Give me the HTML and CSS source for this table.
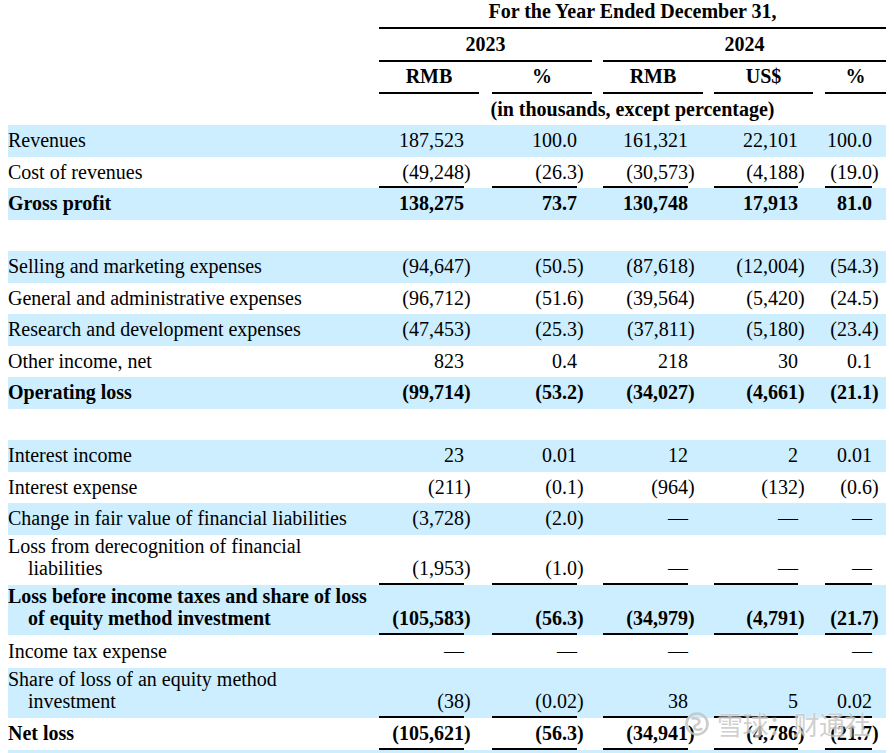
FILE: index.html
```html
<!DOCTYPE html>
<html lang="en">
<head>
<meta charset="utf-8">
<title>Results of Operations</title>
<link rel="stylesheet" href="styles.css">
</head>
<body>
<table class="fin">
  <colgroup>
    <col class="w-lbl">
    <col class="w-v"><col class="w-p"><col class="w-g13">
    <col class="w-v"><col class="w-p"><col class="w-g11">
    <col class="w-v"><col class="w-p"><col class="w-g11">
    <col class="w-v84"><col class="w-p"><col class="w-g12">
    <col class="w-v47"><col class="w-p14">
  </colgroup>
  <thead>
    <tr class="h1"><td></td><td colspan="14" class="rule">For the Year Ended December 31,</td></tr>
    <tr class="h2"><td></td><td colspan="5" class="rule">2023</td><td></td><td colspan="8" class="rule">2024</td></tr>
    <tr class="h3"><td></td><td colspan="2" class="rule">RMB</td><td></td><td colspan="2" class="rule">%</td><td></td><td colspan="2" class="rule">RMB</td><td></td><td colspan="2" class="rule">US$</td><td></td><td colspan="2" class="rule">%</td></tr>
    <tr class="h4"><td></td><td colspan="14">(in thousands, except percentage)</td></tr>
  </thead>
  <tbody>
    <tr>
      <td class="lbl">Revenues</td>
      <td class="n">187,523</td><td class="p"></td><td></td>
      <td class="n">100.0</td><td class="p"></td><td></td>
      <td class="n">161,321</td><td class="p"></td><td></td>
      <td class="n">22,101</td><td class="p"></td><td></td>
      <td class="n">100.0</td><td class="p"></td>
    </tr>
    <tr class="ul">
      <td class="lbl">Cost of revenues</td>
      <td class="n">(49,248</td><td class="p">)</td><td></td>
      <td class="n">(26.3</td><td class="p">)</td><td></td>
      <td class="n">(30,573</td><td class="p">)</td><td></td>
      <td class="n">(4,188</td><td class="p">)</td><td></td>
      <td class="n">(19.0</td><td class="p">)</td>
    </tr>
    <tr class="b">
      <td class="lbl">Gross profit</td>
      <td class="n">138,275</td><td class="p"></td><td></td>
      <td class="n">73.7</td><td class="p"></td><td></td>
      <td class="n">130,748</td><td class="p"></td><td></td>
      <td class="n">17,913</td><td class="p"></td><td></td>
      <td class="n">81.0</td><td class="p"></td>
    </tr>
    <tr class="blank"><td colspan="15"></td></tr>
    <tr>
      <td class="lbl">Selling and marketing expenses</td>
      <td class="n">(94,647</td><td class="p">)</td><td></td>
      <td class="n">(50.5</td><td class="p">)</td><td></td>
      <td class="n">(87,618</td><td class="p">)</td><td></td>
      <td class="n">(12,004</td><td class="p">)</td><td></td>
      <td class="n">(54.3</td><td class="p">)</td>
    </tr>
    <tr>
      <td class="lbl">General and administrative expenses</td>
      <td class="n">(96,712</td><td class="p">)</td><td></td>
      <td class="n">(51.6</td><td class="p">)</td><td></td>
      <td class="n">(39,564</td><td class="p">)</td><td></td>
      <td class="n">(5,420</td><td class="p">)</td><td></td>
      <td class="n">(24.5</td><td class="p">)</td>
    </tr>
    <tr>
      <td class="lbl">Research and development expenses</td>
      <td class="n">(47,453</td><td class="p">)</td><td></td>
      <td class="n">(25.3</td><td class="p">)</td><td></td>
      <td class="n">(37,811</td><td class="p">)</td><td></td>
      <td class="n">(5,180</td><td class="p">)</td><td></td>
      <td class="n">(23.4</td><td class="p">)</td>
    </tr>
    <tr>
      <td class="lbl">Other income, net</td>
      <td class="n">823</td><td class="p"></td><td></td>
      <td class="n">0.4</td><td class="p"></td><td></td>
      <td class="n">218</td><td class="p"></td><td></td>
      <td class="n">30</td><td class="p"></td><td></td>
      <td class="n">0.1</td><td class="p"></td>
    </tr>
    <tr class="b">
      <td class="lbl">Operating loss</td>
      <td class="n">(99,714</td><td class="p">)</td><td></td>
      <td class="n">(53.2</td><td class="p">)</td><td></td>
      <td class="n">(34,027</td><td class="p">)</td><td></td>
      <td class="n">(4,661</td><td class="p">)</td><td></td>
      <td class="n">(21.1</td><td class="p">)</td>
    </tr>
    <tr class="blank"><td colspan="15"></td></tr>
    <tr>
      <td class="lbl">Interest income</td>
      <td class="n">23</td><td class="p"></td><td></td>
      <td class="n">0.01</td><td class="p"></td><td></td>
      <td class="n">12</td><td class="p"></td><td></td>
      <td class="n">2</td><td class="p"></td><td></td>
      <td class="n">0.01</td><td class="p"></td>
    </tr>
    <tr>
      <td class="lbl">Interest expense</td>
      <td class="n">(211</td><td class="p">)</td><td></td>
      <td class="n">(0.1</td><td class="p">)</td><td></td>
      <td class="n">(964</td><td class="p">)</td><td></td>
      <td class="n">(132</td><td class="p">)</td><td></td>
      <td class="n">(0.6</td><td class="p">)</td>
    </tr>
    <tr>
      <td class="lbl">Change in fair value of financial liabilities</td>
      <td class="n">(3,728</td><td class="p">)</td><td></td>
      <td class="n">(2.0</td><td class="p">)</td><td></td>
      <td class="n">—</td><td class="p"></td><td></td>
      <td class="n">—</td><td class="p"></td><td></td>
      <td class="n">—</td><td class="p"></td>
    </tr>
    <tr class="ul two">
      <td class="lbl">Loss from derecognition of financial<br>liabilities</td>
      <td class="n">(1,953</td><td class="p">)</td><td></td>
      <td class="n">(1.0</td><td class="p">)</td><td></td>
      <td class="n">—</td><td class="p"></td><td></td>
      <td class="n">—</td><td class="p"></td><td></td>
      <td class="n">—</td><td class="p"></td>
    </tr>
    <tr class="ul two b">
      <td class="lbl">Loss before income taxes and share of loss<br>of equity method investment</td>
      <td class="n">(105,583</td><td class="p">)</td><td></td>
      <td class="n">(56.3</td><td class="p">)</td><td></td>
      <td class="n">(34,979</td><td class="p">)</td><td></td>
      <td class="n">(4,791</td><td class="p">)</td><td></td>
      <td class="n">(21.7</td><td class="p">)</td>
    </tr>
    <tr class="h33">
      <td class="lbl">Income tax expense</td>
      <td class="n">—</td><td class="p"></td><td></td>
      <td class="n">—</td><td class="p"></td><td></td>
      <td class="n">—</td><td class="p"></td><td></td>
      <td class="n"></td><td class="p"></td><td></td>
      <td class="n">—</td><td class="p"></td>
    </tr>
    <tr class="ul two">
      <td class="lbl">Share of loss of an equity method<br>investment</td>
      <td class="n">(38</td><td class="p">)</td><td></td>
      <td class="n">(0.02</td><td class="p">)</td><td></td>
      <td class="n">38</td><td class="p"></td><td></td>
      <td class="n">5</td><td class="p"></td><td></td>
      <td class="n">0.02</td><td class="p"></td>
    </tr>
    <tr class="ul b h32">
      <td class="lbl">Net loss</td>
      <td class="n">(105,621</td><td class="p">)</td><td></td>
      <td class="n">(56.3</td><td class="p">)</td><td></td>
      <td class="n">(34,941</td><td class="p">)</td><td></td>
      <td class="n">(4,786</td><td class="p">)</td><td></td>
      <td class="n">(21.7</td><td class="p">)</td>
    </tr>
    <tr class="blank"><td colspan="15"></td></tr>
  </tbody>
</table>

<div class="watermark">
  <svg class="wm-logo" width="24" height="24" viewBox="0 0 24 24" aria-hidden="true">
    <circle cx="12" cy="12" r="10.5" fill="none" stroke="#c4c4c4" stroke-width="2.6"/>
    <path d="M7.5 6.5 C12.5 5.5 16 8.5 13.5 11.5 C11.5 13.8 8.5 13 9.5 16 C10.3 18 13.5 18.2 16.5 17" fill="none" stroke="#c4c4c4" stroke-width="2.6" stroke-linecap="round"/>
  </svg>
  <span class="wm-text">雪球：财通社</span>
</div>
</body>
</html>
```

FILE: styles.css
```css
html, body {
  background: #ffffff;
}

body {
  margin: 0 8px;
  position: relative;
  font-family: "Liberation Serif", "Times New Roman", serif;
  font-size: 20px;
  line-height: 22px;
  color: #000000;
}

.fin {
  width: 878px;
  table-layout: fixed;
  border-collapse: separate;
  border-spacing: 0;
}

.w-lbl { width: 371px; }
.w-v { width: 85px; }
.w-v84 { width: 84px; }
.w-v47 { width: 47px; }
.w-p { width: 15px; }
.w-p14 { width: 14px; }
.w-g13 { width: 13px; }
.w-g11 { width: 11px; }
.w-g12 { width: 12px; }

.fin td {
  padding: 0 0 5.5px 0;
  vertical-align: bottom;
  white-space: nowrap;
}

/* header */
.fin thead td {
  font-weight: bold;
  text-align: center;
  padding-bottom: 5px;
}

.fin thead .h1 { height: 29px; }
.fin thead .h2 { height: 33px; }
.fin thead .h3 { height: 31.5px; }
.fin thead .h4 { height: 31.5px; }

.fin thead .h4 td {
  vertical-align: middle;
  padding-bottom: 0;
}

.fin .rule {
  border-bottom: 2px solid #000000;
}

/* body rows */
.fin tbody tr { height: 31.5px; }
.fin tbody tr.two { height: 50px; }
.fin tbody tr.h33 { height: 33px; }
.fin tbody tr.h32 { height: 32px; }

.fin tbody tr:nth-child(odd) {
  background: #cceeff;
}

.fin .b td {
  font-weight: bold;
}

.fin .lbl {
  padding-left: 20px;
  text-indent: -20px;
  white-space: normal;
}

.fin .n {
  text-align: right;
}

.fin .p {
  text-align: left;
}

.fin .ul .n {
  border-bottom: 2px solid #000000;
  padding-bottom: 3.5px;
}

/* watermark overlay */
.watermark {
  position: absolute;
  left: 677px;
  top: 709px;
  display: flex;
  align-items: center;
  gap: 8px;
  opacity: 0.85;
  pointer-events: none;
}

.wm-logo {
  display: block;
}

.wm-text {
  font-family: "Noto Sans CJK SC", "Noto Sans", sans-serif;
  font-size: 26px;
  line-height: 30px;
  letter-spacing: -0.5px;
  color: rgba(190, 190, 190, 0.85);
  text-shadow: 0 0 1px #ffffff, 0 0 2px #ffffff;
}
```
